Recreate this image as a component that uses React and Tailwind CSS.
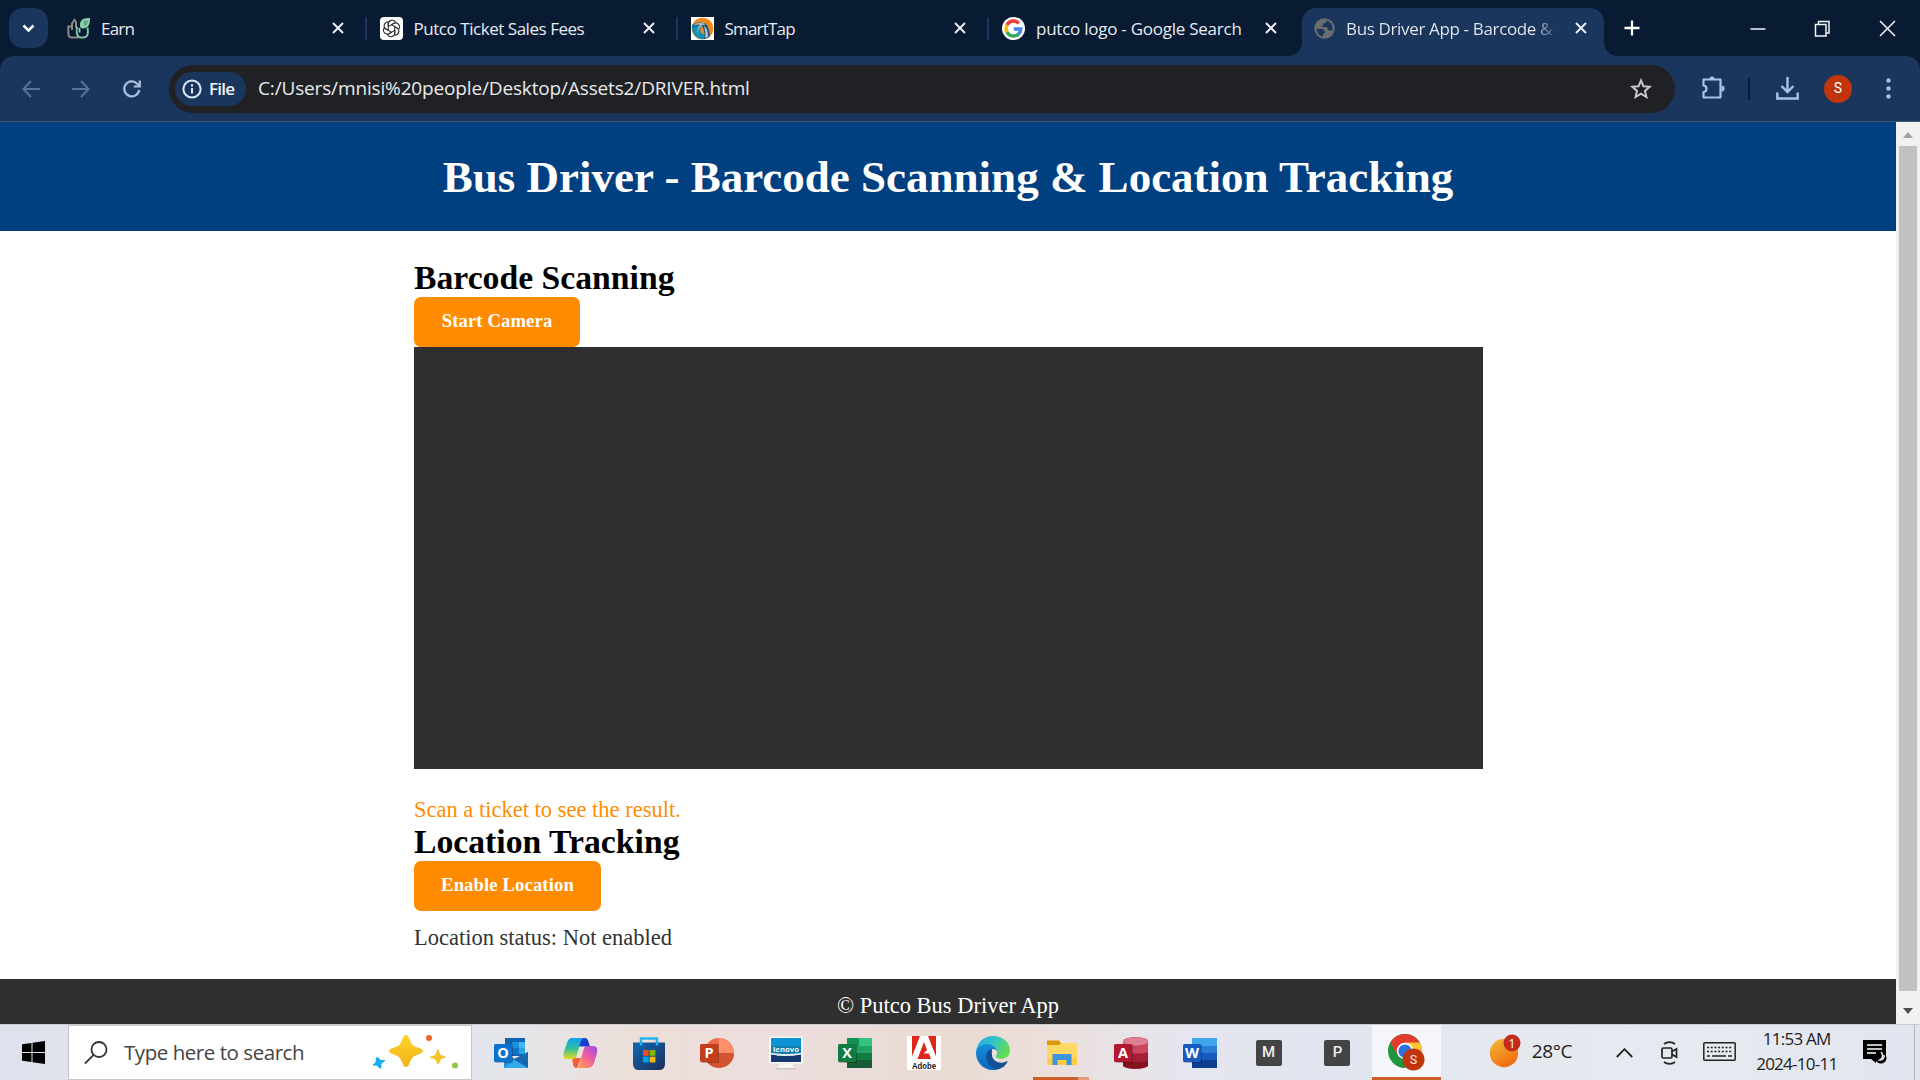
import React from "react";

const segoe = "font-['Open_Sans','Noto_Sans',sans-serif]";
const times = "font-['Liberation_Serif',serif]";

const Close = ({ className = "" }) => (
  <svg className={"shrink-0 " + className} width="12" height="12" viewBox="0 0 12 12" stroke="#e9edf3" strokeWidth="2" fill="none">
    <path d="M1 1l10 10M11 1L1 11" />
  </svg>
);

const PlantIcon = () => (
  <svg width="23" height="23" viewBox="0 0 23 23" fill="none" strokeWidth="2">
    <path d="M11 20.500H5C2 20.500 1.300 18.500 1.300 16V9.500H5V6.500L7.500 3 9 5v6" stroke="#8b8782" />
    <path d="M5 9v4" stroke="#8b8782" />
    <path d="M10.500 10c-1.500 2-1.500 10.500 3.500 10.500h2c5 0 5.500-4 4.500-10" stroke="#7fc4a0" />
    <path d="M14 9.500c-.5-5 1-7.500 8-7.500 0 5-1 8-6.500 8.500z" fill="#5fae86" stroke="#8ed0ab" />
    <path d="M12.500 11v4.500M16 5.500v5" stroke="#8ed0ab" strokeWidth="1.800" />
  </svg>
);

const ChatIcon = () => (
  <svg width="23" height="23" viewBox="0 0 23 23">
    <rect width="23" height="23" rx="4" fill="#fff" />
    <g fill="none" stroke="#333" strokeWidth="1.100" transform="translate(11.5 11.5)">
      {[0, 60, 120, 180, 240, 300].map((a) => (
        <path key={a} transform={`rotate(${a})`} d="M-3.200 1.800V-4.300C-3.300-8.500 2-9.700 4.200-6.200M-.3-3.600L3.600-5.900" />
      ))}
    </g>
  </svg>
);

const SmartTapIcon = () => (
  <svg width="23" height="23" viewBox="0 0 23 23">
    <rect width="23" height="23" fill="#fff" />
    <circle cx="11.500" cy="11.500" r="10.800" fill="#f08a1c" />
    <path d="M1.500 7C-.5 14 4 22 11.500 22.300 17 22 17 18 12 17 8 15 9 10 12 7z" fill="#1690b2" />
    <path d="M1 11C2 6 8 4 12 6c4 0 6 4 7 13-2 2-4 3-6 3 1-6 0-10-2-13C7 8 4 9 1 11z" fill="#1c577f" />
    <path d="M2 9c3-4 9-5 13-1-5-1-7 3-9 9 0-5 1-7 3-9-3-.5-5 0-7 1z" fill="#a9b9c4" />
    <path d="M13 9c1 4 2 8 1 12l3-1c0-5-1-9-4-11z" fill="#b6c6cf" />
  </svg>
);

const GoogleIcon = () => (
  <svg width="23" height="23" viewBox="0 0 23 23">
    <circle cx="11.500" cy="11.500" r="11.500" fill="#fff" />
    <g fill="none" strokeWidth="3.400">
      <path d="M16.900 6.200A7.400 7.400 0 0 0 5 8" stroke="#ea4335" />
      <path d="M5 8a7.400 7.400 0 0 0 0 7" stroke="#fbbc05" />
      <path d="M5 15a7.400 7.400 0 0 0 11.400 2.200" stroke="#34a853" />
      <path d="M16.400 17.200a7.400 7.400 0 0 0 2.400-5.200H11.800" stroke="#4285f4" />
    </g>
  </svg>
);

const GlobeIcon = () => (
  <svg width="21" height="21" viewBox="0 0 21 21">
    <circle cx="10.500" cy="10.500" r="10.200" fill="#6a6c6e" />
    <path d="M2.500 11h6l2.500 2.500v2H9v3C5.500 18 2.600 14.500 2.500 11zM12.500 2.500L12 5l-3 .5V8l-3 1h7l1.500 3.500h4C19 7 16.500 3.500 12.500 2.500z" fill="#1b365d" />
  </svg>
);

const Tab = ({ icon, title, spacing, width = "w-[311px]" }) => (
  <div className={"flex h-full shrink-0 items-center pr-[13px] " + width}>
    <div className="flex w-[34px] shrink-0 items-center">{icon}</div>
    <div className={"mt-[2px] whitespace-nowrap text-[17px] leading-[24px] text-[#e6ebf2] " + spacing}>{title}</div>
    <Close className="ml-auto" />
    <div className="ml-[21px] h-[23px] w-[2px] shrink-0 bg-[#1b365d]" />
  </div>
);

function TabStrip() {
  return (
    <div className="flex h-[56px] items-center bg-[#091a33] pl-[9px]">
      <div className="flex h-[40px] w-[39px] shrink-0 items-center justify-center rounded-[14px] bg-[#1b365d]">
        <svg width="13" height="9" viewBox="0 0 13 9" fill="none" stroke="#fff" strokeWidth="2.500"><path d="M1.500 1.500l5 5 5-5" /></svg>
      </div>
      <div className="flex h-full w-[1254px] shrink-0 items-center pl-[19px]">
        <Tab icon={<PlantIcon />} title="Earn" spacing="tracking-[-0.8px]" width="w-[312.500px]" />
        <Tab icon={<ChatIcon />} title="Putco Ticket Sales Fees" spacing="tracking-[-0.46px]" />
        <Tab icon={<SmartTapIcon />} title="SmartTap" spacing="tracking-[-0.8px]" />
        <div className="flex w-[282px] items-center">
          <div className="flex w-[34.500px] shrink-0"><GoogleIcon /></div>
          <div className="mt-px whitespace-nowrap text-[17px] leading-[24px] tracking-[-0.25px] text-[#e6ebf2]">putco logo - Google Search</div>
          <Close className="ml-auto mr-[7px]" />
        </div>
      </div>
      <div className="relative flex h-[48px] w-[302px] shrink-0 items-center self-end rounded-t-[14px] bg-[#1b365d] pb-[8px] pl-[12px] pr-[17px]">
        <svg className="absolute bottom-0 -left-[14px]" width="14" height="14" viewBox="0 0 14 14"><path d="M14 0v14H0A14 14 0 0 0 14 0z" fill="#1b365d" /></svg>
        <svg className="absolute bottom-0 -right-[14px]" width="14" height="14" viewBox="0 0 14 14"><path d="M0 0v14h14A14 14 0 0 1 0 0z" fill="#1b365d" /></svg>
        <div className="w-[32px] shrink-0"><GlobeIcon /></div>
        <div className="mt-[2px] w-[222px] shrink-0 overflow-hidden whitespace-nowrap bg-gradient-to-r from-[#e9edf3] from-84% to-transparent to-96% bg-clip-text text-[17px] leading-[24px] tracking-[-0.35px] text-transparent">Bus Driver App - Barcode &amp; L</div>
        <Close className="ml-auto" />
      </div>
      <svg className="ml-[20px] shrink-0" width="16" height="16" viewBox="0 0 16 16" stroke="#fff" strokeWidth="2.300"><path d="M8 0.500v15M0.500 8h15" /></svg>
      <svg className="ml-auto mr-[24px] shrink-0" width="147" height="17" viewBox="0 0 147 17" fill="none" stroke="#f2f4f7" strokeWidth="1.500">
        <path d="M1.500 9h15M131 1l15 15M146 1L131 16" />
        <path d="M66.500 4.500h10.500v11.500H66.500zM69.500 4.500V1.500h10.500v11.500H77" />
      </svg>
    </div>
  );
}

function Toolbar() {
  return (
    <div className="bg-[#091a33]">
      <div className="flex h-[66px] items-center rounded-t-[14px] border-b border-[#3a5474] bg-[#1b365d] pl-[22px]">
        <svg className="shrink-0" width="18" height="18" viewBox="0 0 18 18" fill="none" stroke="#5a7298" strokeWidth="2"><path d="M18 9H2M9 1L1.500 9 9 17" /></svg>
        <svg className="ml-[32px] shrink-0" width="18" height="18" viewBox="0 0 18 18" fill="none" stroke="#5a7298" strokeWidth="2"><path d="M0 9h16M9 1l7.500 8L9 17" /></svg>
        <svg className="ml-[32px] shrink-0" width="20" height="20" viewBox="0 0 20 20" fill="none" stroke="#a9bedf" strokeWidth="2.200"><path d="M17.200 11a7.500 7.500 0 1 1-2-6.300L17.500 7M17.800 1.500v6h-6" /></svg>
        <div className="ml-[27px] flex h-[48px] w-[1506px] shrink-0 items-center rounded-full bg-[#202124] pl-[6px] pr-[23px]">
          <div className="flex h-[34px] w-[71px] shrink-0 items-center rounded-full bg-[#1b365d] pl-[7px]">
            <svg width="20" height="20" viewBox="0 0 20 20" fill="none" stroke="#dfe8f7" strokeWidth="2"><circle cx="10" cy="10" r="8.600" /><path d="M10 9v5.500M10 5.300v2.200" /></svg>
            <span className="ml-[7px] text-[17px] font-semibold tracking-[-0.8px] text-[#f0f4fb]">File</span>
          </div>
          <span className="ml-[12px] whitespace-nowrap text-[19px] tracking-[-0.15px] text-[#e8eaed]">C:/Users/mnisi%20people/Desktop/Assets2/DRIVER.html</span>
          <svg className="ml-auto" width="22" height="21" viewBox="0 0 22 21" fill="none" stroke="#c7c9cc" strokeWidth="2"><path d="M11 2.500l2.500 5.800 6.200.5-4.700 4.100 1.400 6.100L11 15.700 5.600 19l1.400-6.100-4.700-4.100 6.200-.5z" /></svg>
        </div>
        <svg className="ml-[27px] shrink-0" width="23" height="23" viewBox="0 0 23 23" fill="none" stroke="#a9c2ea" strokeWidth="2.200" overflow="visible"><path d="M1.500 2.500h17v18H1.500v-5.500c4-.5 4-6 0-6.500z" strokeLinejoin="round" /><path d="M8 2a2 2 0 0 1 4 0M19.500 9a2.500 2.500 0 0 1 0 5" fill="#a9c2ea" strokeWidth="1.200" /></svg>
        <div className="ml-[23px] h-[22px] w-[2px] shrink-0 bg-[#091a33]" />
        <svg className="ml-[26px] shrink-0" width="23" height="23" viewBox="0 0 23 23" fill="none" stroke="#a9c2ea" strokeWidth="2.400"><path d="M11.500 0v14M5.500 9l6 6 6-6M1.300 15.500v6h20.400v-6" /></svg>
        <div className="ml-[25px] flex size-[28px] shrink-0 items-center justify-center rounded-full bg-[#c0350a] font-['Roboto',sans-serif] text-[14px] text-white">S</div>
        <svg className="ml-[34px] shrink-0" width="5" height="21" viewBox="0 0 5 21" fill="#a9c2ea"><circle cx="2.500" cy="2.500" r="2.200" /><circle cx="2.500" cy="10.500" r="2.200" /><circle cx="2.500" cy="18.500" r="2.200" /></svg>
      </div>
    </div>
  );
}

const Btn = ({ children, w }) => (
  <button className={"flex h-[50.500px] items-center justify-center rounded-[7px] bg-[#ff8c00] pb-[1px] text-[18.700px] font-bold tracking-[0.1px] text-white " + w}>{children}</button>
);

function Page() {
  return (
    <div className="flex h-[902px]">
      <div className={"flex w-[1896px] shrink-0 flex-col bg-white " + times}>
        <header className="flex h-[108.500px] items-center justify-center bg-[#004080] pt-[2px]">
          <h1 className="whitespace-nowrap text-[45px] font-bold leading-[52px] text-white">Bus Driver - Barcode Scanning &amp; Location Tracking</h1>
        </header>
        <main className="flex h-[748px] flex-col items-start pl-[414px] pt-[27px]">
          <h2 className="text-[33.700px] font-bold leading-[39px] text-black">Barcode Scanning</h2>
          <Btn w="w-[166px]">Start Camera</Btn>
          <div className="h-[421.500px] w-[1069px] bg-[#2f2f2f]" />
          <p className="mt-[28px] text-[22.500px] leading-[25px] text-[#ff8c00]">Scan a ticket to see the result.</p>
          <h2 className="text-[33.700px] font-bold leading-[39px] text-black">Location Tracking</h2>
          <Btn w="w-[187px]">Enable Location</Btn>
          <p className="mt-[14px] text-[22.500px] leading-[25px] text-[#333]">Location status: Not enabled</p>
        </main>
        <footer className="flex grow items-start justify-center bg-[#2f2f2f] pt-[14px] text-[22.500px] leading-[25px] text-white">© Putco Bus Driver App</footer>
      </div>
      <div className="flex w-[24px] flex-col items-center bg-[#f1f1f1]">
        <svg className="mt-[10px]" width="10" height="6" viewBox="0 0 10 6"><path d="M0 6l5-6 5 6z" fill="#a3a3a3" /></svg>
        <div className="mt-[8px] h-[845px] w-[18px] bg-[#c1c1c1]" />
        <svg className="mt-[17px]" width="10" height="6" viewBox="0 0 10 6"><path d="M0 0l5 6 5-6z" fill="#505050" /></svg>
      </div>
    </div>
  );
}

const OfficeTile = ({ letter, fill }) => (
  <>
    <rect x="1" y="8" width="18" height="19" rx="1.500" fill="#000" opacity=".25" />
    <rect x="0" y="8" width="18" height="18" rx="1.500" fill={fill} />
    <text x="9" y="22" textAnchor="middle" fontSize="14.500" fontWeight="700" fontFamily="Open Sans, sans-serif" fill="#fff">{letter}</text>
  </>
);

const Svg = ({ children }) => <svg width="34" height="34" viewBox="0 0 34 34" overflow="visible">{children}</svg>;

const Outlook = () => (
  <Svg>
    <rect x="11" y="2" width="20" height="18" fill="#0f64b4" />
    <path d="M18 6h7v6h-7z" fill="#1d8fe0" /><path d="M25 6h6v6h-6z" fill="#42b8f2" /><path d="M18 12h7v6h-7z" fill="#1474c9" /><path d="M25 12h6v6h-6z" fill="#27a3ea" />
    <path d="M10 18l12 5 12-7v16H10z" fill="#1c8fdc" /><path d="M34 16v16L20 23z" fill="#1466b0" /><path d="M10 32l10-8 14 8z" fill="#36a9ea" />
    <OfficeTile letter="O" fill="#0a72ce" />
  </Svg>
);
const Copilot = () => (
  <Svg>
    <defs>
      <linearGradient id="cpA" x1="0" y1="0" x2="0" y2="1"><stop offset="0" stopColor="#12a0f2" /><stop offset=".5" stopColor="#2fc09c" /><stop offset="1" stopColor="#e8d81c" /></linearGradient>
      <linearGradient id="cpB" x1="1" y1="0" x2=".2" y2="1"><stop offset="0" stopColor="#9450f4" /><stop offset=".5" stopColor="#ec5aa0" /><stop offset="1" stopColor="#fda052" /></linearGradient>
    </defs>
    <path d="M18 2h4c3 0 3.500 4 5 8.500H15z" fill="#1b3ed2" />
    <path d="M9 22h9l-4 10h-1c-3 0-3-5-4-10z" fill="#f1603c" />
    <path d="M10 2h11c-3 1-3.500 4-4.500 8l-3 10c-.7 2-1.500 3-3.500 3H4c-4 0-4-3.500-3-7.500L4 7c1-3 2-5 6-5z" fill="url(#cpA)" />
    <path d="M24 32H13c3-1 3.500-4 4.500-8l3-10c.7-3 1.500-4 3.500-4h6c4 0 5 3 4 7l-3 10c-1 3-3 5-7 5z" fill="url(#cpB)" />
  </Svg>
);
const Store = () => (
  <Svg>
    <defs><linearGradient id="st" x1="0" y1="0" x2="1" y2="1"><stop offset="0" stopColor="#0e68b5" /><stop offset="1" stopColor="#1c2f58" /></linearGradient></defs>
    <path d="M9 9V2.500h16V9" fill="none" stroke="#25b2ee" strokeWidth="2.500" />
    <path d="M1 6.500h32V28c0 3-2 6-5 6H6c-3 0-5-3-5-6z" fill="url(#st)" />
    <path d="M7.800 6.500h2.500v3H7.800zM23.800 6.500h2.500v3h-2.500z" fill="#25b2ee" />
    <path d="M11 14h5.700v5.700H11z" fill="#f25022" /><path d="M17.700 14h5.700v5.700h-5.700z" fill="#7fba00" /><path d="M11 20.700h5.700v5.700H11z" fill="#00a4ef" /><path d="M17.700 20.700h5.700v5.700h-5.700z" fill="#ffb900" />
  </Svg>
);
const PowerPoint = () => (
  <Svg>
    <circle cx="19" cy="17" r="15" fill="#ed6c47" /><path d="M19 2a15 15 0 0 1 15 15H19z" fill="#ff8f6b" /><path d="M4 17a15 15 0 0 0 30 0z" fill="#d35230" />
    <OfficeTile letter="P" fill="#c43e1c" />
  </Svg>
);
const Lenovo = () => (
  <Svg>
    <path d="M0 .5h34v27H0z" fill="#f7f9fb" /><path d="M2 2h30v16H2z" fill="#0d94d2" /><path d="M2 10h30v8H2z" fill="#117fae" /><path d="M2 18c10 2.500 20 2.500 30 0v8H2z" fill="#153a72" />
    <text x="17" y="15.500" textAnchor="middle" fontSize="7" fontWeight="700" fontFamily="Open Sans, sans-serif" fill="#e9f6fb" textLength="26" lengthAdjust="spacingAndGlyphs">lenovo</text>
    <path d="M2 17c10 1.500 20 1.500 30 0v1.500c-10 1.800-20 1.800-30 0z" fill="#e8f4f8" />
    <path d="M11 28h12l2 4H9z" fill="#f6f6f6" /><path d="M7 32h20v1.500H7z" fill="#c9c6c6" />
  </Svg>
);
const Excel = () => (
  <Svg>
    <path d="M9 2h25v30H9z" fill="#21a366" /><path d="M9 2h12v8H9z" fill="#169154" /><path d="M21 2h13v8H21z" fill="#33c481" /><path d="M9 17h25v8H9z" fill="#107c41" /><path d="M9 24h25v8H9z" fill="#185c37" />
    <OfficeTile letter="X" fill="#107c41" />
  </Svg>
);
const Adobe = () => (
  <Svg>
    <path d="M0 0h34v34H0z" fill="#fff" /><path d="M5 0h24v23H5z" fill="#e1251b" /><path d="M13 0h8l9 23h-6l-2-5.500h-5.500L20 14l-3-8-6.500 17H4z" fill="#fff" />
    <text x="17" y="32.500" textAnchor="middle" fontSize="9.500" fontWeight="700" fontFamily="Liberation Sans, sans-serif" fill="#1a1a1a" textLength="24" lengthAdjust="spacingAndGlyphs">Adobe</text>
  </Svg>
);
const Edge = () => (
  <Svg>
    <defs>
      <linearGradient id="eg" x1="0" y1="0" x2="1" y2=".4"><stop offset="0" stopColor="#29a8e2" /><stop offset=".5" stopColor="#2fc2cf" /><stop offset="1" stopColor="#62de52" /></linearGradient>
      <linearGradient id="eb" x1="0" y1="0" x2="0" y2="1"><stop offset="0" stopColor="#1790dc" /><stop offset="1" stopColor="#0a66bd" /></linearGradient>
    </defs>
    <path d="M0 16C1 6 8 0 17 0s17 6 17 14c0 6-4 9-9 9-3 0-5.500-1-5.500-2.500 0-1 1.500-1.500 1.500-4C21 12 17 9 12 9 6 9 2 12 0 16z" fill="url(#eg)" />
    <path d="M0 17c0-5 5-9 11-9 5 0 10 3 10 8-1-2-3-3-5-3-6 3-5 14 3 17 4 2 8 0 11-2-3 4-8 6-13 6C7 34 0 26 0 17z" fill="url(#eb)" />
    <path d="M16 13c-4 0-6 4-6 8 0 6 6 13 12 12 4-1 8-4 9.500-7 .3-1-.5-1-1.500-.5-6 3-13 0-14-6-.3-3 0-5 0-6.500z" fill="#124f96" />
    <path d="M16 17c0-2 1-3.500 2.500-3.500S21 15 21 17c0 2-1.500 2.500-1.500 3.500 0 1.500 2.500 2.500 5.500 2.500 3 0 5-1 6.500-2.500-1 3-1.500 4.500-4 5.300C21 27 16 23 16 17z" fill="#eaded8" />
  </Svg>
);
const Explorer = () => (
  <Svg>
    <path d="M2 4.500h12l2 2.500v4H2z" fill="#dd9a07" /><path d="M2 9h12l2-2h16v22H2z" fill="#ffd767" /><path d="M2 22h30v7H2z" fill="#ffcb45" />
    <path d="M7.500 18h19v11h-5v-5h-9v5h-5z" fill="#3a96dd" />
  </Svg>
);
const Access = () => (
  <Svg>
    <path d="M9 6c0-6 25-6 25 0v23c0 5-25 5-25 0z" fill="#a61f36" /><path d="M9 5c0-5 25-5 25 0v11c-6 2-18 2-25 0z" fill="#cb4860" /><ellipse cx="21.500" cy="5.500" rx="12.500" ry="4" fill="#e07f93" /><path d="M9 24c6 3 19 3 25 0v5c0 5-25 5-25 0z" fill="#86111f" />
    <OfficeTile letter="A" fill="#b0192f" />
  </Svg>
);
const Word = () => (
  <Svg>
    <path d="M9 2h25v30H9z" fill="#2b7cd3" /><path d="M9 2h25v8H9z" fill="#41a5ee" /><path d="M9 17h25v8H9z" fill="#185abd" /><path d="M9 24h25v8H9z" fill="#103f91" />
    <OfficeTile letter="W" fill="#185abd" />
  </Svg>
);
const Letter = ({ c }) => (
  <div className="flex size-[26px] items-center justify-center rounded-[2px] bg-[#444] font-['Roboto',sans-serif] text-[15px] font-medium text-[#eee]">{c}</div>
);
const Chrome = () => (
  <svg className="ml-[1px]" width="37" height="38" viewBox="0 0 37 38">
    <circle cx="17" cy="17" r="17" fill="#1e9641" />
    <path d="M17 17L2.300 8.500A17 17 0 0 1 31.700 8.500z" fill="#e33b2e" /><path d="M17 8.500h14.700A17 17 0 0 1 17 34l7.400-12.700z" fill="#fcc934" /><path d="M2.300 8.500L9.600 21.300 17 8.500z" fill="#e33b2e" />
    <circle cx="17" cy="17" r="8.300" fill="#fff" /><circle cx="17" cy="17" r="6.600" fill="#2d70e0" />
    <circle cx="25.500" cy="25.500" r="11" fill="#c0350a" />
    <text x="25.500" y="30" textAnchor="middle" fontSize="12.500" fontFamily="Roboto, sans-serif" fill="#f4e7e2">S</text>
  </svg>
);

const apps = [
  <Outlook />, <Copilot />, <Store />, <PowerPoint />, <Lenovo />, <Excel />, <Adobe />, <Edge />,
  <Explorer />, <Access />, <Word />, <Letter c="M" />, <Letter c="P" />, <Chrome />,
];

const cellStyle = (i) => (i === 13 ? "bg-[#f5f6f9]" : "");

function Taskbar() {
  return (
    <div className="flex h-[56px] items-stretch border-t border-[#c9cbd0] bg-linear-[90deg,#dfe2ec_0%,#e4e6ec_26%,#ecdfd9_33%,#ebdedd_40%,#e9dad3_50%,#ecdfda_54%,#e5e6ef_62%,#e1e5ef_70%,#e5e8ee_78%,#e6e9ef_90%,#e1e5f0_100%]">
      <div className="flex w-[68px] shrink-0 items-center pl-[22px]">
        <svg width="23" height="23" viewBox="0 0 23 23" fill="#000"><path d="M0 3.300l9.500-1.300v9H0zM10.500 1.800L23 0v11H10.500zM0 12h9.500v9L0 19.700zM10.500 12H23v11l-12.500-1.800z" /></svg>
      </div>
      <div className="flex w-[404px] shrink-0 items-center border border-[#c8c8c8] bg-white pl-[15px]">
        <svg width="24" height="24" viewBox="0 0 24 24" fill="none" stroke="#333" strokeWidth="1.800"><circle cx="15" cy="8.500" r="7.500" /><path d="M9.700 13.800L.8 22.700" /></svg>
        <span className="ml-[16px] whitespace-nowrap text-[20.500px] tracking-[-0.45px] text-[#444]">Type here to search</span>
        <svg className="ml-auto mr-[12px] -mt-[2px]" width="88" height="36" viewBox="0 0 88 36">
          <defs><linearGradient id="sp" x1="0" y1="0" x2="0" y2="1"><stop offset="0" stopColor="#fdd32a" /><stop offset="1" stopColor="#f3b21b" /></linearGradient></defs>
          <path d="M35 1c2 0 3 2 4 5 2 5 3 6 8 7.500 3 1 5 2 5 3.500s-2 2.500-5 3.500c-5 2-6 3-8 7.500-1 3-2 5-4 5s-3-2-4-5c-2-4.500-3-5.500-8-7.500-3-1-5-2-5-3.500s2-2.500 5-3.500c5-1.500 6-2.500 8-7.500 1-3 2-5 4-5z" fill="url(#sp)" />
          <path d="M67 15c1 0 1.500 5 3 6s5 1 5 2-4 1.500-5 2.500-2 5-3 5-1.500-4-3-5-5-1.500-5-2.500 4-1 5-2 2-6 3-6z" fill="#f7c22c" />
          <path d="M6 23c1.500-.5 2.500 2.500 4 3s4-1 4 .5-3 2-3.500 3.500.5 4-1 4.500S7 32 5.500 31.500 2 32.500 2 31s2-1.500 2.500-3S4.500 23.500 6 23z" fill="#19aef0" />
          <circle cx="58" cy="4" r="3" fill="#f0622d" /><circle cx="84" cy="31.500" r="3" fill="#8cc63f" />
        </svg>
      </div>
      <div className="ml-[4.300px] flex shrink-0">
        {apps.map((a, i) => (
          <div key={i} className={"relative flex w-[68.900px] items-center justify-center " + cellStyle(i)}>
            {a}
            {i === 8 && <div className="absolute bottom-0 left-[6px] flex h-[3px] w-[56px] bg-[#e19c80]"><div className="w-[45px] bg-[#cc5f26]" /></div>}
            {i === 13 && <div className="absolute inset-x-0 bottom-0 h-[3px] bg-[#cc5f26]" />}
          </div>
        ))}
      </div>
      <div className="ml-[48px] flex shrink-0 items-center">
        <svg className="-mt-[4px]" width="33" height="34" viewBox="0 0 33 34">
          <defs><linearGradient id="wx" x1="0" y1="0" x2=".6" y2="1"><stop offset="0" stopColor="#eebd3a" /><stop offset="1" stopColor="#f46b0c" /></linearGradient></defs>
          <circle cx="15" cy="19" r="14.200" fill="url(#wx)" /><circle cx="23" cy="9" r="8.500" fill="#c42b1c" />
          <text x="23" y="13.500" textAnchor="middle" fontSize="12" fontFamily="Open Sans, sans-serif" fill="#fff">1</text>
        </svg>
        <span className="-mt-[2px] ml-[10px] w-[48px] whitespace-nowrap text-[19px] tracking-[-0.4px] text-[#222]">28°C</span>
        <svg className="ml-[36px]" width="17" height="10" viewBox="0 0 17 10" fill="none" stroke="#222" strokeWidth="1.800"><path d="M.8 9l7.700-7.800L16.200 9" /></svg>
        <svg className="ml-[28px]" width="17" height="24" viewBox="0 0 17 24" fill="none" stroke="#222" strokeWidth="1.700"><rect x="1" y="7" width="10" height="10" rx="1.500" /><path d="M11 10.500l4.500-2.500v8L11 13.500M3 3c3-2.500 8-2.500 11 0M3 21c3 2.500 8 2.500 11 0" /></svg>
        <svg className="-mt-[2px] ml-[25px]" width="33" height="19" viewBox="0 0 33 19" fill="none" stroke="#222" strokeWidth="1.500"><rect x=".8" y=".8" width="31.400" height="17.400" rx="1" /><path d="M4 5.500h25M4 9.500h25" strokeDasharray="2 1.700" /><path d="M4 14h3M9 14h14M25 14h4" /></svg>
        <div className="-mt-[4px] ml-[16px] w-[90px] whitespace-nowrap text-center text-[17px] leading-[25px] tracking-[-0.75px] text-[#222]"><div>11:53 AM</div><div>2024-10-11</div></div>
        <svg className="-mt-[2px] ml-[21px]" width="24" height="24" viewBox="0 0 24 24"><path d="M0 0h23v19h-9l-1 4-5-4H0z" fill="#000" /><path d="M4 5h15M4 9h15M4 13h9" stroke="#fff" strokeWidth="1.500" /><circle cx="18" cy="18" r="5.500" fill="#000" /><path d="M18 12a5 5 0 0 1-1 8 4 4 0 0 0 4-5" fill="none" stroke="#e6e9ef" strokeWidth="1.500" /></svg>
      </div>
      <div className="ml-auto mr-[5px] w-px bg-[#b4b7c0]" />
    </div>
  );
}

export default function App() {
  return (
    <div className={"flex h-[1080px] w-[1920px] flex-col overflow-hidden " + segoe}>
      <TabStrip />
      <Toolbar />
      <Page />
      <Taskbar />
    </div>
  );
}
